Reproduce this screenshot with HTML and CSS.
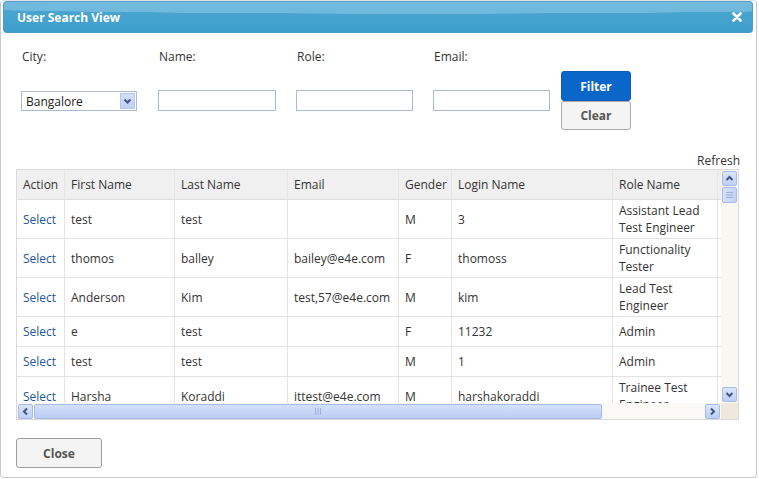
FILE: index.html
```html
<!DOCTYPE html>
<html>
<head>
<meta charset="utf-8">
<title>User Search View</title>
<link rel="stylesheet" href="styles.css">
</head>
<body>
<div class="dialog">
  <div class="titlebar">
    <span class="title">User Search View</span>
    <svg class="xicon" width="10" height="10" viewBox="0 0 10 10"><path d="M1.5 1.5 L8.5 8.5 M8.5 1.5 L1.5 8.5" stroke="#fff" stroke-width="2.6" stroke-linecap="round"/></svg>
  </div>
  <div class="content">
    <div class="filters">
      <div class="field">
        <div class="label">City:</div>
        <div class="select">
          <span>Bangalore</span>
          <span class="sel-btn"><svg width="13" height="14" viewBox="0 0 13 14"><polyline points="3.5,5.5 6.5,8.5 9.5,5.5" fill="none" stroke="#3f5580" stroke-width="2"/></svg></span>
        </div>
      </div>
      <div class="field">
        <div class="label">Name:</div>
        <div class="input"></div>
      </div>
      <div class="field">
        <div class="label">Role:</div>
        <div class="input"></div>
      </div>
      <div class="field">
        <div class="label">Email:</div>
        <div class="input"></div>
      </div>
      <div class="btns">
        <button class="btn-filter">Filter</button>
        <button class="btn-clear">Clear</button>
      </div>
    </div>
    <div class="refresh">Refresh</div>
    <div class="grid">
      <div class="viewport">
        <div class="row head">
          <div class="cell">Action</div><div class="cell">First Name</div><div class="cell">Last Name</div><div class="cell">Email</div><div class="cell">Gender</div><div class="cell">Login Name</div><div class="cell">Role Name</div><div class="cell"></div>
        </div>
        <div class="row">
          <div class="cell link">Select</div><div class="cell">test</div><div class="cell">test</div><div class="cell"></div><div class="cell">M</div><div class="cell">3</div><div class="cell">Assistant Lead Test Engineer</div><div class="cell"></div>
        </div>
        <div class="row">
          <div class="cell link">Select</div><div class="cell">thomos</div><div class="cell">balley</div><div class="cell">bailey@e4e.com</div><div class="cell">F</div><div class="cell">thomoss</div><div class="cell">Functionality Tester</div><div class="cell"></div>
        </div>
        <div class="row">
          <div class="cell link">Select</div><div class="cell">Anderson</div><div class="cell">Kim</div><div class="cell">test,57@e4e.com</div><div class="cell">M</div><div class="cell">kim</div><div class="cell">Lead Test Engineer</div><div class="cell"></div>
        </div>
        <div class="row">
          <div class="cell link">Select</div><div class="cell">e</div><div class="cell">test</div><div class="cell"></div><div class="cell">F</div><div class="cell">11232</div><div class="cell">Admin</div><div class="cell"></div>
        </div>
        <div class="row">
          <div class="cell link">Select</div><div class="cell">test</div><div class="cell">test</div><div class="cell"></div><div class="cell">M</div><div class="cell">1</div><div class="cell">Admin</div><div class="cell"></div>
        </div>
        <div class="row">
          <div class="cell link">Select</div><div class="cell">Harsha</div><div class="cell">Koraddi</div><div class="cell">ittest@e4e.com</div><div class="cell">M</div><div class="cell">harshakoraddi</div><div class="cell">Trainee Test Engineer</div><div class="cell"></div>
        </div>
      </div>
      <div class="vbar">
        <div class="sb-btn"><svg width="13" height="13" viewBox="0 0 13 13"><polyline points="3.5,8 6.5,5 9.5,8" fill="none" stroke="#3f5580" stroke-width="2"/></svg></div>
        <div class="vthumb"><svg width="9" height="8" viewBox="0 0 9 8"><path d="M1 1.5H8M1 4H8M1 6.5H8" stroke="#9db0d8" stroke-width="1"/></svg></div>
        <div class="spacer"></div>
        <div class="sb-btn"><svg width="13" height="13" viewBox="0 0 13 13"><polyline points="3.5,5 6.5,8 9.5,5" fill="none" stroke="#3f5580" stroke-width="2"/></svg></div>
      </div>
      <div class="hbar">
        <div class="sb-btn"><svg width="13" height="13" viewBox="0 0 13 13"><polyline points="8,3.5 5,6.5 8,9.5" fill="none" stroke="#3f5580" stroke-width="2"/></svg></div>
        <div class="hthumb"><svg width="8" height="9" viewBox="0 0 8 9"><path d="M1.5 1V8M4 1V8M6.5 1V8" stroke="#9db0d8" stroke-width="1"/></svg></div>
        <div class="spacer"></div>
        <div class="sb-btn"><svg width="13" height="13" viewBox="0 0 13 13"><polyline points="5,3.5 8,6.5 5,9.5" fill="none" stroke="#3f5580" stroke-width="2"/></svg></div>
      </div>
      <div class="corner"></div>
    </div>
    <div class="footer">
      <button class="btn-close">Close</button>
    </div>
  </div>
</div>
</body>
</html>
```

FILE: styles.css
```css
* { box-sizing: border-box; }

body {
  margin: 0;
  background: #fff;
  font-family: "Open Sans", "Noto Sans", sans-serif;
  font-size: 12px;
  color: #333;
}

.dialog {
  width: 757px;
  height: 478px;
  border: 1px solid #c6cacd;
  border-top-color: #dfe3e6;
  border-radius: 4px;
  background: #fff;
}

.titlebar {
  margin: 0 3px 0 2px;
  height: 32px;
  border: 1px solid #4d9bc8;
  border-top-color: #5aa2cc;
  border-radius: 4px;
  background:
    radial-gradient(ellipse 140% 95% at 55% -28%, #74bcde 0, #6fb9dc 70%, rgba(111,185,220,0) 71%),
    linear-gradient(#4ea8d2, #3d9ecb);
  display: flex;
  align-items: center;
  justify-content: space-between;
  padding: 0 10px 0 13px;
  color: #fff;
  font-weight: bold;
  font-size: 12px;
}

.title { letter-spacing: 0; }

.xicon { display: block; }

.content {
  padding: 0 16px 0 15px;
}

.filters {
  display: grid;
  grid-template-columns: 137px 138px 137px 128px 70px;
  padding: 15px 0 0 5px;
  align-items: start;
}

.label {
  line-height: 17px;
  padding-left: 1px;
  color: #333;
}

.input {
  margin-top: 25px;
  width: 118px;
  height: 21px;
  border: 1px solid #a9bbd1;
  background: #fff;
}

.field:nth-child(3) .input,
.field:nth-child(4) .input { width: 117px; }

.select {
  margin-top: 26px;
  width: 116px;
  height: 20px;
  border: 1px solid #a9bbd1;
  display: flex;
  align-items: center;
  justify-content: space-between;
  padding: 0 1px 0 4px;
  color: #222;
}

.sel-btn {
  width: 15px;
  height: 16px;
  background: linear-gradient(#d4e0fa, #bfd0f4);
  border: 1px solid #b4c6ec;
  display: flex;
  align-items: center;
  justify-content: center;
}

.sel-btn svg { display: block; }

.btns {
  margin-top: 23px;
  display: flex;
  flex-direction: column;
}

.btns button, .btn-close {
  font-family: "Open Sans", "Noto Sans", sans-serif;
  font-size: 12px;
  font-weight: bold;
  margin: 0;
  cursor: pointer;
}

.btn-filter {
  width: 70px;
  height: 30px;
  background: #0b66c9;
  border: 1px solid #0a5db8;
  border-radius: 3px;
  color: #fff;
}

.btn-clear {
  width: 70px;
  height: 29px;
  background: #f4f4f4;
  border: 1px solid #ababab;
  border-radius: 3px;
  color: #555;
}

.refresh {
  margin-top: 22px;
  text-align: right;
  line-height: 17px;
  color: #333;
}

.grid {
  width: 723px;
  display: grid;
  grid-template-columns: 704px 17px;
  grid-template-rows: 233px 16px;
  border: 1px solid #dadada;
}

.viewport {
  grid-row: 1;
  grid-column: 1;
  overflow: hidden;
}

.row {
  display: grid;
  grid-template-columns: 48px 110px 113px 111px 53px 161px 105px 200px;
  width: max-content;
}

.cell {
  min-height: 30px;
  padding: 2px 5px 2px 6px;
  line-height: 17px;
  border-right: 1px solid #e3e3e3;
  border-bottom: 1px solid #e3e3e3;
  display: flex;
  align-items: center;
  color: #333;
}

.head .cell {
  background: #f0f0f0;
  border-right-color: #e6e6e6;
  border-bottom-color: #dedede;
}

.cell.link { color: #23589b; }

.vbar {
  grid-row: 1;
  grid-column: 2;
  background: #f8f7f2;
  display: flex;
  flex-direction: column;
  align-items: center;
  padding: 1px 0;
}

.hbar {
  grid-row: 2;
  grid-column: 1;
  background: #faf9f5;
  display: flex;
  align-items: center;
  padding: 0 1px;
}

.corner {
  grid-row: 2;
  grid-column: 2;
  background: #efe9dd;
}

.spacer { flex: 1; }

.sb-btn {
  width: 15px;
  height: 15px;
  flex: none;
  background: linear-gradient(#dbe6fc, #bdcff5);
  border: 1px solid #a6bbe6;
  border-radius: 2px;
  display: flex;
  align-items: center;
  justify-content: center;
}

.sb-btn svg, .vthumb svg, .hthumb svg { display: block; }

.vthumb {
  width: 15px;
  height: 16px;
  margin-top: 1px;
  background: linear-gradient(90deg, #d6e2fb, #c3d3f6);
  border: 1px solid #a6bbe6;
  border-radius: 2px;
  display: flex;
  align-items: center;
  justify-content: center;
}

.hthumb {
  width: 568px;
  height: 15px;
  margin-left: 1px;
  background: linear-gradient(#d3e0fb, #bccdf4);
  border: 1px solid #a6bbe6;
  border-radius: 2px;
  display: flex;
  align-items: center;
  justify-content: center;
}

.footer {
  margin-top: 18px;
}

.btn-close {
  width: 86px;
  height: 30px;
  background: #f4f4f4;
  border: 1px solid #9d9d9d;
  border-radius: 3px;
  color: #555;
}
```
